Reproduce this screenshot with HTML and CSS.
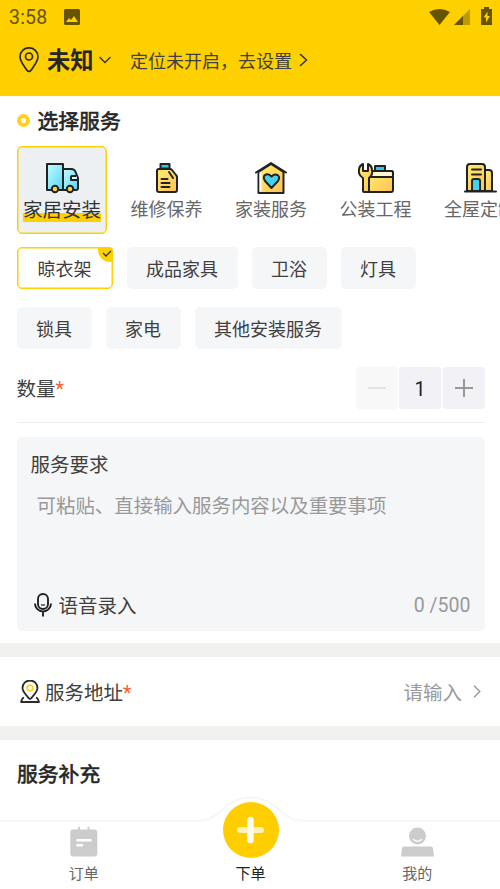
FILE: index.html
```html
<!DOCTYPE html>
<html lang="zh-CN">
<head>
<meta charset="utf-8">
<meta name="viewport" content="width=device-width">
<title>下单</title>
<link rel="stylesheet" href="styles.css">
</head>
<body>
<div class="app">
  <header class="header">
    <div class="status">
      <span class="clock">3:58</span>
      <svg class="photo" width="16" height="16" viewBox="0 0 16 16"><rect width="16" height="16" rx="1.5" fill="#665300"/><path d="M2 13l3-4 2 2 3-4 4 6z" fill="#ffd000"/></svg>
      <svg class="signals" width="64" height="20" viewBox="0 0 64 20"><path d="M1 5Q11.500-1 22 5L11.500 18z" fill="#665300"/><path d="M26 18L42 2v16z" fill="#bd9b00"/><path d="M26 18l9-9v9z" fill="#665300"/><path d="M53 2h3V0h5v2h3v16H53z" fill="#665300"/><path d="M59.500 4.500l-4 6h2.500v5l4-6.500h-2.500z" fill="#ffd000"/></svg>
    </div>
    <div class="location">
      <svg width="20" height="26" viewBox="0 0 20 26" fill="none" stroke="#2b2b2b" stroke-width="1.700"><path d="M10 24.500Q8.500 24.500 7 22C4 17.500 1 14 1 9.800a9 9 0 0 1 18 0C19 14 16 17.500 13 22Q11.500 24.500 10 24.500z"/><circle cx="10" cy="9.500" r="3.500"/></svg>
      <strong class="city">未知</strong>
      <svg class="down" width="12" height="8" viewBox="0 0 12 8" fill="none" stroke="#333" stroke-width="1.300"><path d="M.5 1L6 6.500 11.500 1"/></svg>
      <span class="tip">定位未开启，去设置</span>
      <svg class="go" width="9" height="14" viewBox="0 0 9 14" fill="none" stroke="#333" stroke-width="1.500"><path d="M1 1l6.500 6L1 13"/></svg>
    </div>
  </header>

  <main>
    <section class="order">
      <h2 class="title"><i class="ring"></i><span>选择服务</span></h2>
      <div class="categories">
        <div class="category active">
          <svg width="34" height="32" viewBox="0 0 34 32" stroke="#222" stroke-width="2" stroke-linejoin="round"><defs><linearGradient id="blue" x1="0" y1="0" x2="1" y2="1"><stop stop-color="#c5fbff"/><stop offset="1" stop-color="#55d5f5"/></linearGradient><linearGradient id="gold" x1="0" y1="0" x2="1" y2="1"><stop stop-color="#fff06a"/><stop offset="1" stop-color="#ffc05a"/></linearGradient></defs><path d="M2 2h16v26H2z" fill="url(#blue)"/><path d="M18 7h8q4 0 5 4l2 5v10q0 2-2 2H18z" fill="url(#blue)"/><path d="M31.500 14H27q-1 0-1 1v3h6" fill="#dfffff"/><circle cx="10" cy="27" r="3.200" fill="#ffd23d"/><circle cx="25" cy="27" r="3.200" fill="#ffd23d"/></svg>
          <span>家居安装</span>
        </div>
        <div class="category">
          <svg width="34" height="32" viewBox="0 0 34 32" stroke="#222" stroke-width="2" stroke-linejoin="round" stroke-linecap="round"><path d="M9 7h11q1 0 2 1l4 5q1 1 1 2v13q0 2-2 2H9q-2 0-2-2V9q0-2 2-2z" fill="url(#gold)"/><path d="M10.500 2h9v4.500h-9z" fill="#35c8ee"/><path d="M19 10l4 6M11.500 17h6M11.500 21h8M11.500 25h8" fill="none"/></svg>
          <span>维修保养</span>
        </div>
        <div class="category">
          <svg width="34" height="32" viewBox="0 0 34 32" stroke="#222" stroke-width="2" stroke-linejoin="round" stroke-linecap="round"><path d="M4.500 10v21h25V10L17 2z" fill="url(#gold)"/><path d="M6.500 11v18" stroke="#fff"/><path d="M2 10.500L17 1l15 9.500" fill="none"/><path d="M17.500 26L11 19q-3-5 1-6.500 3-1 5.500 2 3-3 6-1.500 3 2 .5 6z" fill="#42d2f2"/></svg>
          <span>家装服务</span>
        </div>
        <div class="category">
          <svg width="36" height="32" viewBox="0 0 36 32" stroke="#222" stroke-width="2" stroke-linejoin="round"><path d="M17 4h10v6H17z" fill="#35c8ee"/><path d="M11 9h22q2 0 2 2v17q0 2-2 2H11z" fill="url(#gold)"/><path d="M12 9h21q2 0 2 2v4H12z" fill="#fff8ce"/><path d="M5 29V16Q0 13 1 8q0-4 4-6v7h5V2q4 2 4 6 1 5-3 8v14H6q-1 0-1-1z" fill="url(#gold)"/></svg>
          <span>公装工程</span>
        </div>
        <div class="category">
          <svg width="34" height="32" viewBox="0 0 34 32" stroke="#222" stroke-width="2" stroke-linejoin="round" stroke-linecap="round"><path d="M22 8h4q3 0 3 3v18h-7z" fill="url(#gold)"/><path d="M4 29V5q0-3 3-3h12q3 0 3 3v24z" fill="url(#gold)"/><path d="M9 29V19q0-2 2-2h4q2 0 2 2v10z" fill="#42d2f2"/><path d="M9 7.500h9M9 12.500h9M2 29.500h31" fill="none"/></svg>
          <span>全屋定制</span>
        </div>
      </div>
      <div class="chips">
        <span class="chip selected">晾衣架<i class="corner"><svg width="15" height="15" viewBox="0 0 15 15" fill="none" stroke="#333" stroke-width="1.300"><path d="M5 6l3 3 5-5"/></svg></i></span>
        <span class="chip">成品家具</span><span class="chip">卫浴</span><span class="chip">灯具</span>
      </div>
      <div class="chips">
        <span class="chip">锁具</span><span class="chip">家电</span><span class="chip">其他安装服务</span>
      </div>
      <div class="quantity">
        <span class="label">数量<b class="star">*</b></span>
        <div class="stepper">
          <span class="step off"><svg width="18" height="18" viewBox="0 0 18 18"><path d="M0 9h18" stroke="#e2e2e2" stroke-width="2"/></svg></span>
          <span class="step number">1</span>
          <span class="step"><svg width="18" height="18" viewBox="0 0 18 18"><path d="M0 9h18M9 0v18" stroke="#9a9698" stroke-width="2"/></svg></span>
        </div>
      </div>
      <div class="request">
        <div class="request-title">服务要求</div>
        <div class="placeholder">可粘贴、直接输入服务内容以及重要事项</div>
        <div class="request-foot">
          <svg width="18" height="24" viewBox="0 0 18 24" fill="none" stroke="#222" stroke-width="1.900"><rect x="4" y="1" width="10" height="15" rx="5"/><path d="M1 10.500a8 8 0 0 0 16 0M9 19V23.500"/><path d="M7 12h4" stroke-width="1.200"/></svg>
          <span class="voice">语音录入</span>
          <span class="count">0 /500</span>
        </div>
      </div>
    </section>
    <section class="address">
      <svg width="20" height="23" viewBox="0 0 20 23" fill="none" stroke="#2b2b2b" stroke-width="1.800" stroke-linejoin="round"><path d="M10 19Q8.500 18.500 7 16C4.500 13 2.500 11 2.500 8a7.500 7.500 0 0 1 15 0c0 3-2 5-4.500 8Q11.500 18.500 10 19z"/><circle cx="10" cy="8" r="2.900" stroke="#ffd51c"/><path d="M4 17.500Q2 18 1 22h18q-1-4-3-4.500"/></svg>
      <span class="address-label">服务地址<b class="star">*</b></span>
      <span class="enter">请输入</span>
      <svg width="8" height="13" viewBox="0 0 8 13" fill="none" stroke="#999" stroke-width="1.400"><path d="M1 .8l5.800 5.700L1 12.200"/></svg>
    </section>
    <section class="extra"><h2 class="extra-title">服务补充</h2></section>
  </main>

  <nav class="tabbar">
    <svg class="shell" width="500" height="94" viewBox="0 0 500 94"><path d="M-4 26H196Q212 26 223 14 234 2.500 250.500 2.500T278 14Q290 26 304 26H504V98H-4z" fill="#fff" stroke="#f7f7f7" stroke-width="2"/></svg>
    <a class="tab"><svg width="28" height="30" viewBox="0 0 28 30"><path d="M9 0v5M18.500 0v5" stroke="#ccc" stroke-width="2"/><rect x=".3" y="2.500" width="27" height="27" rx="3" fill="#ccc"/><path d="M7.500 13.300h13M7.500 18.300h4.500" stroke="#fff" stroke-width="2.600" stroke-linecap="round"/></svg><span>订单</span></a>
    <a class="tab current"><svg width="56" height="56" viewBox="0 0 56 56"><circle cx="28" cy="28" r="28" fill="#ffce00"/><path d="M17 28h21" stroke="#fff2b8" stroke-width="6" stroke-linecap="round"/><path d="M27.500 18v20" stroke="#fffdf2" stroke-width="6.500" stroke-linecap="round"/></svg><span>下单</span></a>
    <a class="tab"><svg width="34" height="30" viewBox="0 0 34 30"><circle cx="17.500" cy="9" r="8.500" fill="#ccc"/><path d="M13.500 12.500q4 3.500 8 0" fill="none" stroke="#fff" stroke-width="1.500" stroke-linecap="round"/><path d="M4 19.500h27q2 0 2.200 3l.8 7H1l.8-7q.2-3 2.200-3z" fill="#ccc"/></svg><span>我的</span></a>
  </nav>
</div>
</body>
</html>
```
FILE: styles.css
```css
* { box-sizing: border-box; }
body { margin: 0; background: #fff; color: #404040; font-family: Roboto, "Noto Sans CJK SC", sans-serif; font-weight: 400; }
svg { display: block; flex: none; }
i { font-style: normal; }
.app { position: relative; width: 500px; height: 889px; overflow: hidden; }
.header { height: 95.500px; background: #ffd000; }
.status { height: 34px; display: flex; align-items: center; padding: 0 8px 0 9px; }
.clock { font-size: 19.500px; line-height: 34px; color: #665300; letter-spacing: .2px; width: 55px; padding-top: 1px; }
.signals { margin-left: auto; }
.location { height: 52px; display: flex; align-items: center; padding-left: 19px; white-space: nowrap; }
.city { font-size: 23.300px; margin-left: 8px; width: 47px; color: #262626; line-height: 34px; padding-top: 1px; }
.down { margin-left: 5px; }
.tip { font-size: 18px; margin-left: 19px; padding-bottom: 1px; }
.go { margin-left: 7px; }
.order { height: 547.500px; padding: 0 15.500px 0 16.500px; }
.title { margin: 0; height: 50px; display: flex; align-items: center; gap: 9px; }
.title, .extra-title { font-family: "Noto Sans CJK SC", sans-serif; font-size: 20.800px; font-weight: 400; color: #262626; -webkit-text-stroke: .6px #262626; }
.title span { padding-bottom: 2px; }
.ring { width: 13px; height: 13px; border: 4px solid #ffd11a; border-radius: 50%; margin-right: -1px; }
.categories { display: flex; gap: 14.500px; margin-right: -16px; overflow: hidden; }
.category { flex: none; width: 90px; height: 88px; border: 1px solid transparent; border-radius: 5px; padding-top: 15.500px; padding-left: 1px; display: flex; flex-direction: column; align-items: center; font-size: 18px; color: #666; }
.category span { line-height: 26px; margin-top: 3px; white-space: nowrap; }
.category.active { background: #edf0f3; border-color: #ffd000; box-shadow: inset 0 0 0 .5px #ffd000; font-size: 19.500px; color: #333; }
.category.active span { background: linear-gradient(transparent 60%, #ffd000 60%, #ffd000 92%, transparent 92%); height: 27px; line-height: 27px; }
.chips { display: flex; gap: 14px; padding-top: 13.500px; height: 59.500px; }
.chips + .chips { padding-top: 14px; }
.chip { position: relative; height: 42px; padding: 0 19.500px; border-radius: 5px; background: #f5f6f8; font-size: 18px; line-height: 45px; white-space: nowrap; }
.chip.selected { padding: 0 20px; border: 1px solid #ffd000; box-shadow: inset 0 0 0 .5px #ffd000; background: #fff; line-height: 43px; }
.corner { position: absolute; top: -1px; right: -1px; width: 15px; height: 15px; background: #ffd000; border-radius: 0 4px 0 12px; }
.quantity { height: 70px; display: flex; align-items: center; justify-content: space-between; border-bottom: 1px solid #eee; margin-bottom: 14px; }
.label { font-size: 19.500px; padding-top: 1px; }
.star { color: #ff5a2b; font-weight: 400; font-size: 19.500px; }
.stepper { display: flex; gap: 1.500px; margin-top: 1px; }
.step { width: 42px; height: 42px; border-radius: 3px; background: #f2f1f6; display: flex; align-items: center; justify-content: center; font-size: 19.500px; color: #222; }
.step.number { padding-top: 3px; }
.step.off { background: #f8f8f8; }
.request { height: 194px; background: #f5f6f8; border-radius: 5px; padding: 14px 14px 13px; display: flex; flex-direction: column; }
.request-title { font-size: 19.500px; line-height: 29px; }
.placeholder { margin: 12px 0 0 6px; font-size: 19.450px; line-height: 29px; color: #999; white-space: nowrap; }
.request-foot { margin-top: auto; height: 25px; display: flex; align-items: center; padding-left: 3px; font-size: 19.500px; }
.voice { margin-left: 7px; padding-bottom: 2px; }
.count { margin-left: auto; color: #999; }
.address { height: 97px; border: solid #f0f0ee; border-width: 14px 0; display: flex; align-items: center; padding: 0 19px 0 20px; font-size: 19.500px; }
.address-label { margin-left: 5px; }
.enter { margin-left: auto; margin-right: 11px; color: #999; }
.extra { padding: 0 17px; }
.extra-title { margin: 0; line-height: 67px; }
.tabbar { position: absolute; left: 0; bottom: 0; width: 500px; height: 94px; display: flex; }
.shell { position: absolute; left: 0; top: 0; }
.tab { position: relative; flex: 1; display: flex; flex-direction: column; justify-content: flex-end; align-items: center; font-size: 15px; line-height: 22px; color: #666; padding: 0 0 4px 1px; }
.tab span { margin-top: 6px; }
.tab.current { color: #222; }
.current span { margin-top: 5px; }
```
